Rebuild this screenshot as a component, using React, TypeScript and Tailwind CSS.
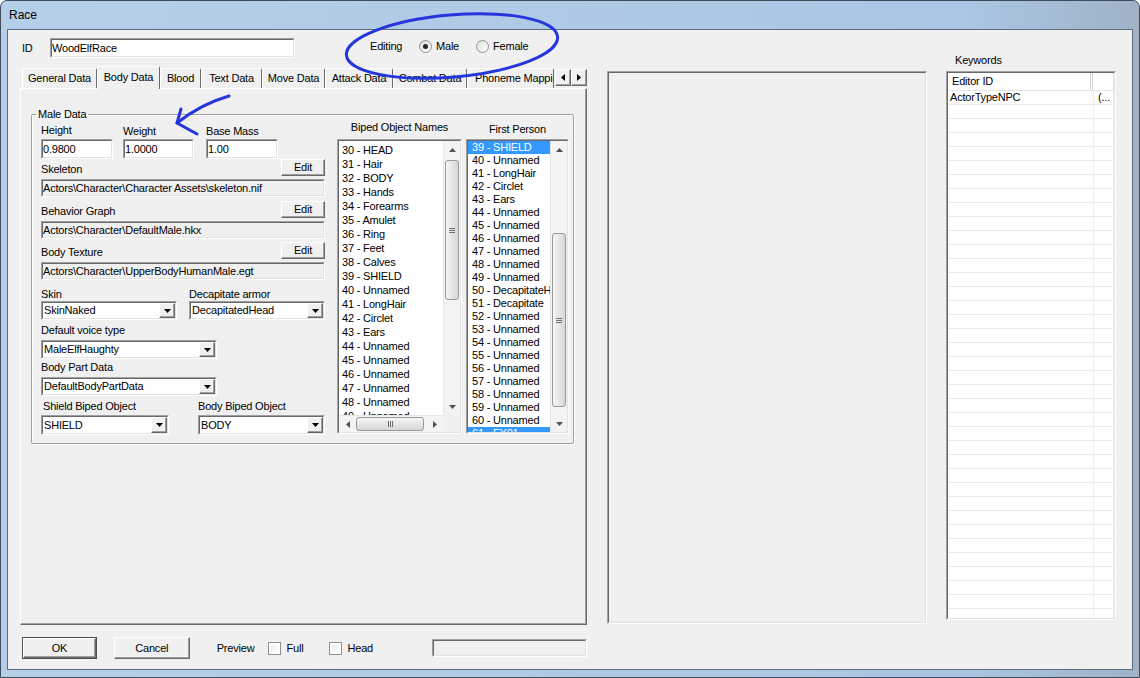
import React from "react"

const sunkenOuter = "border border-t-[#a0a0a0] border-l-[#a0a0a0] border-r-white border-b-white"
const sunkenInner = "border border-t-[#696969] border-l-[#696969] border-r-[#e3e3e3] border-b-[#e3e3e3]"
const raised =
  "border border-t-white border-l-white border-r-[#696969] border-b-[#696969] shadow-[inset_-1px_-1px_0_#a0a0a0]"

type Dir = "up" | "down" | "left" | "right"

function Tri({ dir, className = "" }: { dir: Dir; className?: string }) {
  const paths: Record<Dir, string> = {
    up: "M0 4L3.5 0L7 4Z",
    down: "M0 0L7 0L3.5 4Z",
    left: "M4 0L4 7L0 3.5Z",
    right: "M0 0L4 3.5L0 7Z",
  }
  const vertical = dir === "up" || dir === "down"
  return (
    <svg
      width={vertical ? 7 : 4}
      height={vertical ? 4 : 7}
      viewBox={vertical ? "0 0 7 4" : "0 0 4 7"}
      className={className}
    >
      <path d={paths[dir]} fill="currentColor" />
    </svg>
  )
}

function Field({ value, className = "", grey = false }: { value: string; className?: string; grey?: boolean }) {
  return (
    <div className={`${sunkenOuter} ${className}`}>
      <div
        className={`${sunkenInner} h-full ${grey ? "bg-[#f0f0f0]" : "bg-white"} flex items-center whitespace-nowrap overflow-hidden`}
      >
        {value}
      </div>
    </div>
  )
}

function Combo({ value, className = "" }: { value: string; className?: string }) {
  return (
    <div className={`${sunkenOuter} ${className}`}>
      <div className={`${sunkenInner} h-full bg-white flex`}>
        <div className="flex-1 flex items-center pl-[1px] whitespace-nowrap overflow-hidden">{value}</div>
        <div className={`${raised} w-[16px] bg-[#f0f0f0] flex items-center justify-center`}>
          <Tri dir="down" />
        </div>
      </div>
    </div>
  )
}

function Button({ label, className = "", children }: { label?: string; className?: string; children?: React.ReactNode }) {
  return (
    <div className={`${raised} bg-[#f0f0f0] flex items-center justify-center ${className}`}>
      {label}
      {children}
    </div>
  )
}

function Radio({ checked = false }: { checked?: boolean }) {
  return (
    <div className="w-[13px] h-[13px] rounded-full border border-[#8e8f8f] bg-linear-to-br from-[#dedede] to-white flex items-center justify-center">
      {checked && <div className="w-[5px] h-[5px] rounded-full bg-[#262626]" />}
    </div>
  )
}

function Check() {
  return (
    <div className="w-[13px] h-[13px] border border-[#8e8f8f] bg-white p-[2px]">
      <div className="w-full h-full bg-linear-to-br from-[#ececec] to-white" />
    </div>
  )
}

function Grip({ horizontal = false }: { horizontal?: boolean }) {
  return (
    <div className={`flex ${horizontal ? "flex-row" : "flex-col"} gap-[1px]`}>
      {[0, 1, 2].map((i) => (
        <div key={i} className={horizontal ? "w-[1px] h-[6px] bg-[#707070]" : "w-[6px] h-[1px] bg-[#707070]"} />
      ))}
    </div>
  )
}

function VScroll({ gap, thumb }: { gap: string; thumb: string }) {
  return (
    <div className="w-[17px] flex flex-col bg-[#f3f3f3] border-l border-[#e6e6e6] text-[#505050]">
      <div className="h-[17px] flex items-center justify-center">
        <Tri dir="up" />
      </div>
      <div className={gap} />
      <div
        className={`${thumb} mx-[1px] rounded-[3px] border border-[#999999] bg-linear-to-r from-[#f6f6f6] to-[#d6d6d6] flex items-center justify-center`}
      >
        <Grip />
      </div>
      <div className="flex-1" />
      <div className="h-[17px] flex items-center justify-center">
        <Tri dir="down" />
      </div>
    </div>
  )
}

function HScroll() {
  return (
    <div className="h-[17px] flex bg-[#f3f3f3] border-t border-[#e6e6e6] text-[#505050]">
      <div className="w-[17px] flex items-center justify-center">
        <Tri dir="left" />
      </div>
      <div className="w-[68px] my-[1px] rounded-[3px] border border-[#999999] bg-linear-to-b from-[#f6f6f6] to-[#d6d6d6] flex items-center justify-center">
        <Grip horizontal />
      </div>
      <div className="flex-1" />
      <div className="w-[17px] flex items-center justify-center">
        <Tri dir="right" />
      </div>
    </div>
  )
}

const bipedNames = [
  "30 - HEAD",
  "31 - Hair",
  "32 - BODY",
  "33 - Hands",
  "34 - Forearms",
  "35 - Amulet",
  "36 - Ring",
  "37 - Feet",
  "38 - Calves",
  "39 - SHIELD",
  "40 - Unnamed",
  "41 - LongHair",
  "42 - Circlet",
  "43 - Ears",
  "44 - Unnamed",
  "45 - Unnamed",
  "46 - Unnamed",
  "47 - Unnamed",
  "48 - Unnamed",
  "49 - Unnamed",
]

const firstPerson = [
  "39 - SHIELD",
  "40 - Unnamed",
  "41 - LongHair",
  "42 - Circlet",
  "43 - Ears",
  "44 - Unnamed",
  "45 - Unnamed",
  "46 - Unnamed",
  "47 - Unnamed",
  "48 - Unnamed",
  "49 - Unnamed",
  "50 - DecapitateHead",
  "51 - Decapitate",
  "52 - Unnamed",
  "53 - Unnamed",
  "54 - Unnamed",
  "55 - Unnamed",
  "56 - Unnamed",
  "57 - Unnamed",
  "58 - Unnamed",
  "59 - Unnamed",
  "60 - Unnamed",
  "61 - FX01",
]
const firstPersonSelected = ["39 - SHIELD", "61 - FX01"]

const tabs = [
  { label: "General Data", w: "w-[75px]" },
  { label: "Body Data", w: "w-[63px]", active: true },
  { label: "Blood", w: "w-[41px]" },
  { label: "Text Data", w: "w-[61px]" },
  { label: "Move Data", w: "w-[63px]" },
  { label: "Attack Data", w: "w-[68px]" },
  { label: "Combat Data", w: "w-[74px]" },
  { label: "Phoneme Mappings", w: "w-[87px]", clip: true },
]

const pathRows = [
  { label: "Skeleton", value: "Actors\\Character\\Character Assets\\skeleton.nif", gap: "mt-0" },
  { label: "Behavior Graph", value: "Actors\\Character\\DefaultMale.hkx", gap: "mt-[4px]" },
  { label: "Body Texture", value: "Actors\\Character\\UpperBodyHumanMale.egt", gap: "mt-[3px]" },
]

export default function App() {
  return (
    <div className="relative w-[1140px] h-[678px] overflow-hidden rounded-t-[7px] border border-[#3e4c5c] bg-linear-to-r from-[#b6cfe9] via-[#aac6e4] via-85% to-[#9fb2c6] flex flex-col font-['Liberation_Sans',Arial,sans-serif] text-[11px] tracking-[-0.2px] text-black">
      {/* Title bar */}
      <div className="h-[28px] flex items-center pl-[8px] text-[12px] tracking-normal">Race</div>

      <div className="flex-1 flex px-[6px] pb-[7px]">
        <div className="flex-1 bg-[#f0f0f0] border border-[#5d6d7e] flex pl-[12px]">
          {/* Left column */}
          <div className="w-[567px] flex flex-col">
            {/* ID + Editing */}
            <div className="mt-[8px] h-[20px] flex items-center">
              <span className="ml-[2px] w-[28px]">ID</span>
              <Field value="WoodElfRace" className="w-[245px] h-[20px]" />
              <div className="ml-[75px] mb-[4px] flex items-center">
                <span className="w-[49px]">Editing</span>
                <div className="w-[57px] flex items-center gap-[4px]">
                  <Radio checked />
                  <span>Male</span>
                </div>
                <div className="flex items-center gap-[4px]">
                  <Radio />
                  <span>Female</span>
                </div>
              </div>
            </div>

            {/* Tabs */}
            <div className="mt-[8px] h-[22px] flex items-end pl-[2px]">
              {tabs.map((t) => (
                <div
                  key={t.label}
                  className={`${t.w} ${
                    t.active ? "h-[23px] -mb-[1px] relative z-10 bg-[#f0f0f0] pb-[2px]" : "h-[20px]"
                  } border-t border-l border-r border-t-white border-l-white border-r-[#696969] rounded-t-[2px] flex items-center ${
                    t.clip ? "justify-start pl-[7px]" : "justify-center"
                  } whitespace-nowrap overflow-hidden`}
                >
                  {t.label}
                </div>
              ))}
              <div className="self-start mt-[3px] ml-[1px] flex">
                <Button className="w-[16px] h-[17px]">
                  <Tri dir="left" />
                </Button>
                <Button className="w-[16px] h-[17px]">
                  <Tri dir="right" />
                </Button>
              </div>
            </div>

            {/* Tab panel */}
            <div className="h-[537px] border border-t-white border-l-white border-r-[#696969] border-b-[#696969] shadow-[inset_-1px_-1px_0_#a0a0a0] pl-[10px] pt-[19px]">
              <fieldset className="w-[543px] border border-[#a0a0a0] rounded-[2px] shadow-[1px_1px_0_#ffffff,inset_1px_1px_0_#ffffff]">
                <legend className="ml-[4px] px-[2px] leading-[13px]">Male Data</legend>
                <div className="flex pl-[9px] pb-[8px] leading-[13px]">
                  {/* Form */}
                  <div className="w-[284px] flex flex-col pt-[3px]">
                    <div className="flex h-[13px]">
                      <span className="w-[82px]">Height</span>
                      <span className="w-[83px] mt-[1px]">Weight</span>
                      <span className="mt-[1px]">Base Mass</span>
                    </div>
                    <div className="flex mt-[2px]">
                      <Field value="0.9800" className="w-[72px] h-[20px]" />
                      <Field value="1.0000" className="ml-[10px] w-[71px] h-[20px]" />
                      <Field value="1.00" className="ml-[12px] w-[72px] h-[20px]" />
                    </div>

                    {pathRows.map((r) => (
                      <React.Fragment key={r.label}>
                        <div className={`${r.gap} h-[17px] flex items-end justify-between`}>
                          <span>{r.label}</span>
                          <Button label="Edit" className="w-[44px] h-[17px]" />
                        </div>
                        <Field value={r.value} grey className="mt-[3px] w-[284px] h-[18px]" />
                      </React.Fragment>
                    ))}

                    <div className="mt-[8px] flex h-[13px]">
                      <span className="w-[148px]">Skin</span>
                      <span>Decapitate armor</span>
                    </div>
                    <div className="flex">
                      <Combo value="SkinNaked" className="w-[136px] h-[19px]" />
                      <Combo value="DecapitatedHead" className="ml-[12px] w-[136px] h-[19px]" />
                    </div>

                    <div className="mt-[4px] h-[13px]">Default voice type</div>
                    <Combo value="MaleElfHaughty" className="mt-[3px] w-[176px] h-[19px]" />

                    <div className="mt-[2px] h-[13px]">Body Part Data</div>
                    <Combo value="DefaultBodyPartData" className="mt-[3px] w-[176px] h-[19px]" />

                    <div className="mt-[4px] flex h-[13px]">
                      <span className="w-[157px] pl-[2px]">Shield Biped Object</span>
                      <span>Body Biped Object</span>
                    </div>
                    <div className="mt-[2px] flex">
                      <Combo value="SHIELD" className="w-[128px] h-[20px]" />
                      <Combo value="BODY" className="ml-[29px] w-[127px] h-[20px]" />
                    </div>
                  </div>

                  {/* Biped Object Names */}
                  <div className="ml-[12px] w-[125px] flex flex-col">
                    <div className="h-[13px] text-center">Biped Object Names</div>
                    <div className={`mt-[5px] h-[295px] ${sunkenOuter}`}>
                      <div className={`${sunkenInner} h-full bg-white flex flex-col`}>
                        <div className="flex-1 flex overflow-hidden">
                          <div className="flex-1 pt-[2px] pl-[3px] leading-[14px] overflow-hidden whitespace-nowrap">
                            {bipedNames.map((n) => (
                              <div key={n} className="h-[14px]">
                                {n}
                              </div>
                            ))}
                          </div>
                          <VScroll gap="h-[2px]" thumb="h-[140px]" />
                        </div>
                        <div className="flex">
                          <div className="flex-1">
                            <HScroll />
                          </div>
                          <div className="w-[17px] h-[17px] bg-[#f0f0f0]" />
                        </div>
                      </div>
                    </div>
                  </div>

                  {/* First Person */}
                  <div className="ml-[4px] w-[103px] flex flex-col">
                    <div className="mt-[2px] h-[13px] text-center">First Person</div>
                    <div className={`mt-[3px] h-[295px] ${sunkenOuter}`}>
                      <div className={`${sunkenInner} h-full bg-white flex overflow-hidden`}>
                        <div className="flex-1 overflow-hidden whitespace-nowrap leading-[13px]">
                          {firstPerson.map((n) => (
                            <div
                              key={n}
                              className={`h-[13px] pl-[4px] ${
                                firstPersonSelected.includes(n) ? "bg-[#3399ff] text-white" : ""
                              }`}
                            >
                              {n}
                            </div>
                          ))}
                        </div>
                        <VScroll gap="h-[75px]" thumb="h-[174px]" />
                      </div>
                    </div>
                  </div>
                </div>
              </fieldset>
            </div>

            {/* Bottom buttons */}
            <div className="mt-[12px] h-[22px] flex items-center">
              <Button label="OK" className="ml-[3px] w-[73px] h-[20px] ring-1 ring-[#505050]" />
              <Button label="Cancel" className="ml-[18px] w-[76px] h-[22px]" />
              <span className="ml-[27px] w-[51px]">Preview</span>
              <Check />
              <span className="ml-[6px] w-[43px]">Full</span>
              <Check />
              <span className="ml-[5px] w-[85px]">Head</span>
              <Field value="" grey className="w-[155px] h-[18px]" />
            </div>
          </div>

          {/* Preview area */}
          <div className={`ml-[20px] mt-[41px] w-[320px] h-[553px] ${sunkenOuter}`}>
            <div className={`${sunkenInner} h-full bg-[#f0f0f0]`} />
          </div>

          {/* Keywords */}
          <div className="ml-[19px] w-[170px] flex flex-col">
            <div className="mt-[24px] pl-[9px] h-[13px] leading-[13px]">Keywords</div>
            <div className={`mt-[4px] h-[549px] ${sunkenOuter}`}>
              <div className={`${sunkenInner} h-full bg-white flex flex-col overflow-hidden`}>
                <div className="h-[18px] flex border-b border-[#e5e5e5] shrink-0">
                  <div className="w-[145px] pl-[4px] flex items-center border-r-[3px] border-double border-[#d5d5d5]">
                    Editor ID
                  </div>
                  <div className="flex-1 border-r border-[#e5e5e5]" />
                </div>
                {Array.from({ length: 38 }).map((_, i) => (
                  <div key={i} className="h-[14px] shrink-0 flex border-b border-[#ececec] leading-[13px]">
                    <div className="w-[146px] pl-[2px] border-r border-[#ececec]">{i === 0 ? "ActorTypeNPC" : ""}</div>
                    <div className="flex-1 pl-[4px] border-r border-[#ececec]">{i === 0 ? "(..." : ""}</div>
                  </div>
                ))}
              </div>
            </div>
          </div>
        </div>
      </div>

      {/* Hand-drawn annotations over the screenshot */}
      <svg className="absolute left-0 top-0 pointer-events-none" width="1140" height="678">
        <ellipse
          cx="451"
          cy="45"
          rx="106"
          ry="31"
          transform="rotate(-5 451 45)"
          fill="none"
          stroke="#2436dc"
          strokeWidth="3"
        />
        <path d="M228 95Q200 103 176 122" fill="none" stroke="#2436dc" strokeWidth="3" strokeLinecap="round" />
        <path
          d="M180 108L176 122L196 133"
          fill="none"
          stroke="#2436dc"
          strokeWidth="3"
          strokeLinecap="round"
          strokeLinejoin="round"
        />
      </svg>
    </div>
  )
}
